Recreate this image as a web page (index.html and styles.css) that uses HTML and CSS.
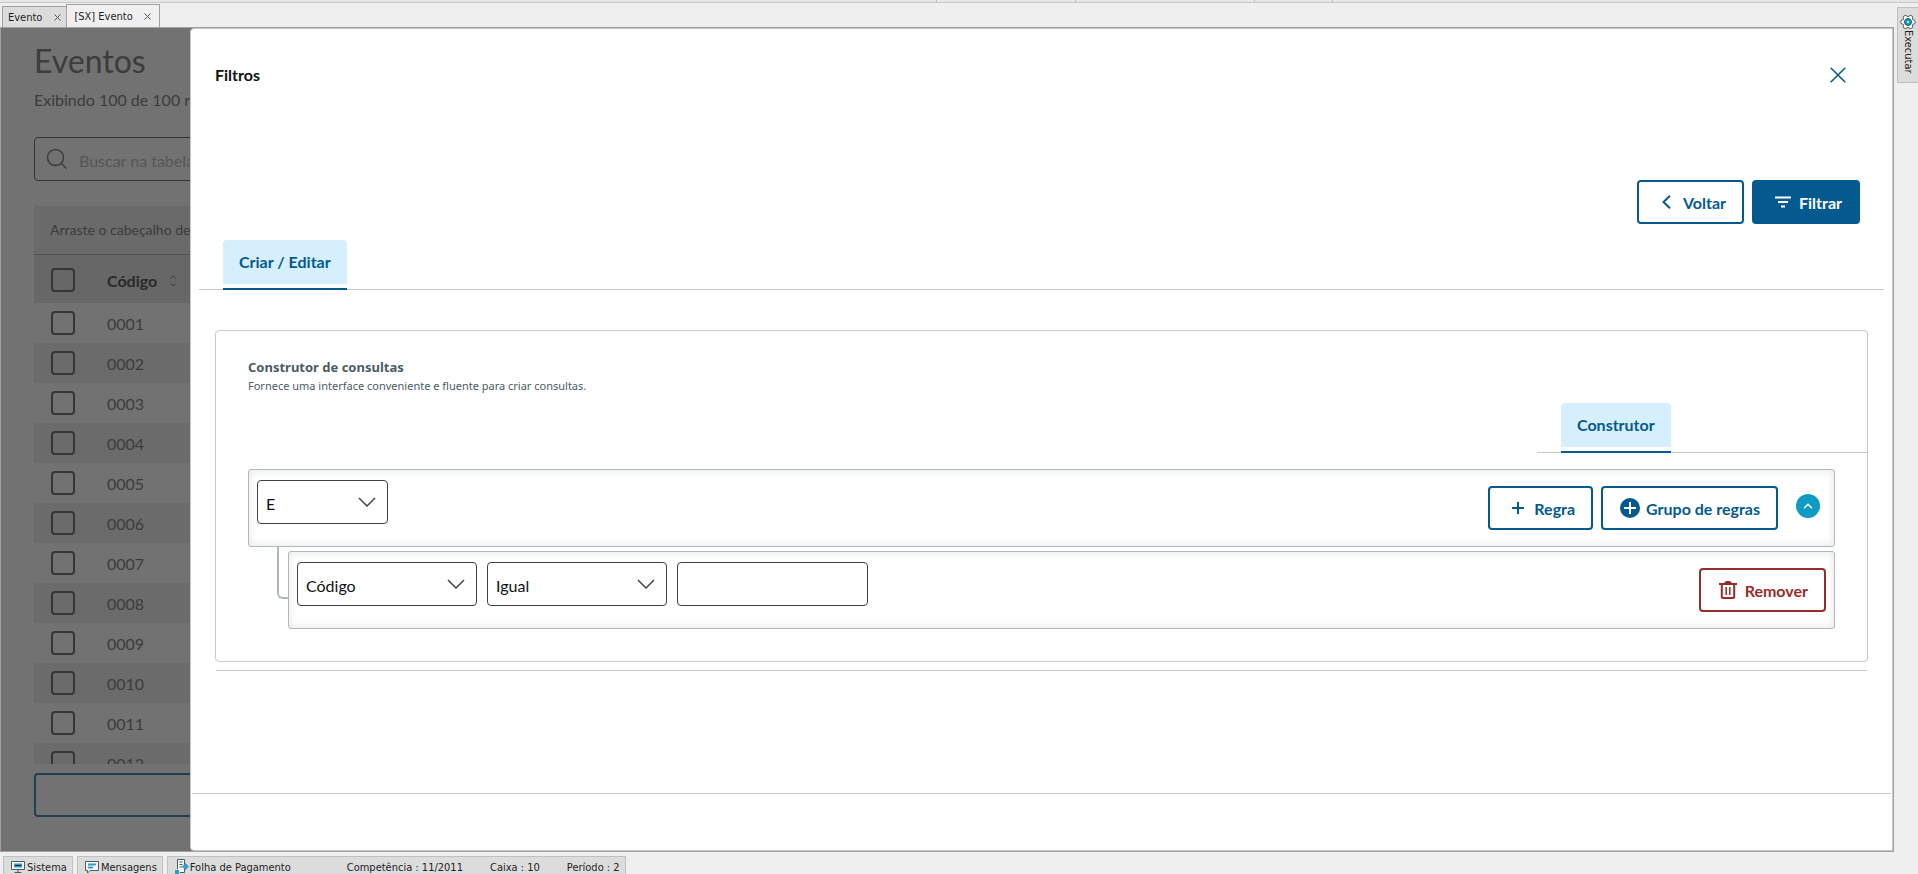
FILE: index.html
```html
<!doctype html>
<html lang="pt-BR">
<head>
	<meta charset="utf-8">
	<title>Evento</title>
	<link rel="stylesheet" href="styles.css">
</head>
<body>
	<div class="app">
		<div class="toolbar-edge"><i></i><i></i><i></i><i></i></div>

		<div class="workspace">
			<div class="main">
				<nav class="tabs">
					<div class="tab"><a href="#">Evento</a><button class="tab-close" aria-label="Fechar Evento"><svg width="7" height="7" viewBox="0 0 7 7"><path d="M.5.5l6 6M6.500 .5l-6 6"/></svg></button></div>
					<div class="tab active"><a href="#">[SX] Evento</a><button class="tab-close" aria-label="Fechar [SX] Evento"><svg width="7" height="7" viewBox="0 0 7 7"><path d="M.5.5l6 6M6.500 .5l-6 6"/></svg></button></div>
				</nav>

				<div class="frame">
					<!-- event list, dimmed by the drawer -->
					<section class="list">
						<h1>Eventos</h1>
						<p class="showing">Exibindo 100 de 100 registros</p>
						<div class="search">
							<svg width="22" height="22" viewBox="0 0 22 22" stroke-width="1.5"><circle cx="9.500" cy="9.500" r="8"/><path d="M15 15l5.500 5.500"/></svg>
							<input type="text" placeholder="Buscar na tabela" aria-label="Buscar na tabela">
						</div>
						<div class="grid">
							<div class="group-hint">Arraste o cabeçalho de uma coluna</div>
							<table>
								<thead>
									<tr>
										<th class="check"><input type="checkbox" aria-label="Selecionar todos"></th>
										<th>Código <svg class="sort" width="8" height="12" viewBox="0 0 8 12"><path d="M1.500 3.500L4 1l2.500 2.500M1.500 8.500L4 11l2.500-2.500"/></svg></th>
									</tr>
								</thead>
								<tbody>
									<tr><td class="check"><input type="checkbox" aria-label="0001"></td><td>0001</td></tr>
									<tr><td class="check"><input type="checkbox" aria-label="0002"></td><td>0002</td></tr>
									<tr><td class="check"><input type="checkbox" aria-label="0003"></td><td>0003</td></tr>
									<tr><td class="check"><input type="checkbox" aria-label="0004"></td><td>0004</td></tr>
									<tr><td class="check"><input type="checkbox" aria-label="0005"></td><td>0005</td></tr>
									<tr><td class="check"><input type="checkbox" aria-label="0006"></td><td>0006</td></tr>
									<tr><td class="check"><input type="checkbox" aria-label="0007"></td><td>0007</td></tr>
									<tr><td class="check"><input type="checkbox" aria-label="0008"></td><td>0008</td></tr>
									<tr><td class="check"><input type="checkbox" aria-label="0009"></td><td>0009</td></tr>
									<tr><td class="check"><input type="checkbox" aria-label="0010"></td><td>0010</td></tr>
									<tr><td class="check"><input type="checkbox" aria-label="0011"></td><td>0011</td></tr>
									<tr><td class="check"><input type="checkbox" aria-label="0012"></td><td>0012</td></tr>
								</tbody>
							</table>
						</div>
						<button class="load-more" aria-label="Carregar mais"></button>
					</section>

					<section class="drawer">
						<header class="drawer-head">
							<h2>Filtros</h2>
							<button class="close" aria-label="Fechar"><svg width="16" height="16" viewBox="0 0 16 16" stroke-width="1.5"><path d="M.7.7l14.600 14.600M15.300.7L.7 15.300"/></svg></button>
						</header>

						<div class="actions">
							<button class="btn voltar"><svg width="9" height="14" viewBox="0 0 9 14"><path d="M8 .8L1.500 7 8 13.200"/></svg>Voltar</button>
							<button class="btn primary"><svg width="16" height="12" viewBox="0 0 16 12"><path d="M0 1.500h16M3 6h10M6 10.500h4"/></svg>Filtrar</button>
						</div>

						<div class="tabbar"><a class="pill" href="#">Criar / Editar</a></div>

						<div class="card">
							<h3>Construtor de consultas</h3>
							<p class="hint">Fornece uma interface conveniente e fluente para criar consultas.</p>
							<div class="tabbar inner"><a class="pill" href="#">Construtor</a></div>

							<div class="group">
								<select class="field small" aria-label="Condição"><option>E</option><option>Ou</option></select>
								<div class="group-actions">
									<button class="btn regra"><svg width="12" height="12" viewBox="0 0 12 12"><path d="M6 0v12M0 6h12"/></svg>Regra</button>
									<button class="btn grupo"><svg width="20" height="20" viewBox="0 0 20 20"><circle class="disc" cx="10" cy="10" r="10"/><path class="cross" d="M10 4v12M4 10h12"/></svg>Grupo de regras</button>
									<button class="toggle" aria-label="Recolher"><svg width="10" height="6" viewBox="0 0 10 6"><path stroke-width="1.5" d="M1 5.200L5 1.300l4 3.900"/></svg></button>
								</div>
							</div>
							<div class="rule-row">
								<div class="rule">
									<select class="field" aria-label="Campo"><option>Código</option></select>
									<select class="field" aria-label="Operador"><option>Igual</option></select>
									<input class="field value" type="text" aria-label="Valor">
									<button class="btn danger"><svg width="18" height="18" viewBox="0 0 18 18"><path d="M0 3h18M2.800 3v12.500q0 1.500 1.500 1.500h9.400q1.500 0 1.500-1.500V3"/><path class="knob" d="M5 2.500Q5.500 0 7.500 0h3Q12.500 0 13 2.500z"/><path stroke-width="1.5" d="M7.200 6v8M10.800 6v8"/></svg>Remover</button>
								</div>
							</div>
						</div>
						<hr class="card-line">
						<footer class="drawer-foot"></footer>
					</section>
				</div>
			</div>

			<aside class="side">
				<button class="executar">
					<svg width="16" height="16" viewBox="0 0 16 16">
						<g class="petals"><circle cx="13" cy="8" r="2.300"/><circle cx="10.500" cy="12.300" r="2.300"/><circle cx="5.500" cy="12.300" r="2.300"/><circle cx="3" cy="8" r="2.300"/><circle cx="5.500" cy="3.700" r="2.300"/><circle cx="10.500" cy="3.700" r="2.300"/></g>
						<circle class="ring" cx="8" cy="8" r="5"/><circle class="core" cx="8" cy="8" r="3.500"/><circle class="dot" cx="8" cy="8" r="1"/>
					</svg>
					<span>Executar</span>
				</button>
			</aside>
		</div>

		<footer class="status">
			<button class="cell"><svg width="14" height="14" viewBox="0 0 14 14"><path class="line" d="M.5 1.500h13v8H.5zM7 9.500v3M3.500 12.500h7"/><path class="blue" d="M3 3.500h8v4H3z"/><path d="M4 5.500h6"/></svg>Sistema</button>
			<button class="cell"><svg width="14" height="14" viewBox="0 0 14 14"><path class="line" d="M.5 1.500h13v9H5l-2.500 2.500v-2.500h-2z"/><path class="blue" d="M3 3.500h8v2H3zM3 6.500h5v2H3z"/></svg>Mensagens</button>
			<div class="cell wide">
				<svg width="14" height="16" viewBox="0 0 14 16"><path class="line" d="M2.500 10V.5h7v13H5M4.500 3h3M4.500 5.500h3M4.500 8h3"/><path class="blue" d="M10.500 4L14 7.500 10.500 11 7 7.500zM0 11h4v4.500H0z"/></svg>
				<span class="module">Folha de Pagamento</span>
				<span>Competência : 11/2011</span>
				<span>Caixa : 10</span>
				<span>Período : 2</span>
			</div>
		</footer>
	</div>
</body>
</html>
```
FILE: styles.css
```css
*, *::before {
	box-sizing: border-box;
}
body {
	margin: 0;
	background: #efefef;
	color: #222;
	font-family: Lato, sans-serif;
	font-size: 16px;
}
button, input, select {
	font: inherit;
	margin: 0;
}
svg {
	fill: none;
	stroke: currentColor;
	flex: none;
}
h1, h2, h3, p {
	margin: 0;
}
.app {
	display: flex;
	flex-direction: column;
	height: 100vh;
	overflow: hidden;
}
.toolbar-edge {
	display: grid;
	grid-template-columns: 937fr 139fr 179fr 78fr 585fr;
	height: 3px;
	background: #e6e6e6;
	border-bottom: 1px solid #c8c8c8;
}
.toolbar-edge i {
	border-right: 1px solid #c0c0c0;
}
.workspace {
	display: flex;
	flex: 1;
	min-height: 0;
}
.main {
	display: flex;
	flex-direction: column;
	flex: 1;
	min-width: 0;
}

/* window tabs */
.tabs, .status, .side {
	font-family: "DejaVu Sans Condensed", "DejaVu Sans", sans-serif;
	font-size: 11px;
}
.tabs {
	display: flex;
	align-items: flex-end;
	height: 24px;
	padding: 0 2px;
}
.tab {
	display: flex;
	align-items: center;
	gap: 12px;
	height: 21px;
	padding: 0 5px;
	background: #dcdcdc;
	border: 1px solid #a0a0a0;
	border-width: 1px 0 0 1px;
}
.tab.active {
	gap: 11px;
	height: 23px;
	padding: 0 8px 0 7px;
	background: #f0f0f0;
	border-width: 1px 1px 0;
}
.tab a {
	color: #1e1e1e;
	text-decoration: none;
}
.tab-close {
	display: flex;
	padding: 0;
	border: 0;
	background: none;
	color: #555;
}

/* content frame */
.frame {
	display: flex;
	flex: 1;
	min-height: 0;
	background: #727272;
	border: 1px solid #a0a0a0;
}
.list {
	display: flex;
	flex-direction: column;
	flex: none;
	width: 189px;
	padding: 13px 0 34px 33px;
	overflow: hidden;
	white-space: nowrap;
	color: #3c3c3c;
}
.list h1 {
	font-size: 32px;
	font-weight: 400;
	line-height: 40px;
}
.showing {
	margin-top: 9px;
	line-height: 20px;
}
.search {
	display: flex;
	align-items: center;
	gap: 11px;
	flex: none;
	width: 400px;
	height: 44px;
	margin-top: 27px;
	padding: 0 11px;
	border: 1px solid #333;
	border-radius: 4px;
}
.search input {
	flex: 1;
	padding: 2px 0 0;
	border: 0;
	background: none;
}
.search input::placeholder {
	color: #565656;
}
.grid {
	flex: 1;
	min-height: 0;
	width: 400px;
	margin-top: 25px;
	overflow: hidden;
}
.group-hint {
	height: 49px;
	padding-left: 16px;
	background: #6a6a6a;
	border-bottom: 1px solid #505050;
	font-size: 14px;
	line-height: 48px;
}
.grid table {
	width: 100%;
	border-collapse: collapse;
}
.grid th, .grid td {
	height: 40px;
	padding: 0 8px 0 0;
	text-align: left;
}
.grid th {
	height: 48px;
	padding-top: 2px;
	background: #676767;
	color: #2a2a2a;
}
.grid tbody tr:nth-child(even) {
	background: #6b6b6b;
}
.grid .check {
	width: 73px;
	padding-left: 17px;
}
.grid input {
	display: block;
	appearance: none;
	width: 24px;
	height: 24px;
	border: 2px solid #363636;
	border-radius: 4px;
}
.sort {
	margin-left: 8px;
	color: #2b3f4c;
}
.load-more {
	flex: none;
	width: 400px;
	height: 44px;
	margin-top: 9px;
	background: none;
	border: 2px solid #1f3f54;
	border-radius: 4px;
}

/* filter drawer */
.drawer {
	display: flex;
	flex-direction: column;
	flex: 1;
	min-width: 0;
	padding: 0 1px;
	background: #fff;
	border: 1px solid #c8c8c8;
	border-radius: 4px 0 0 4px;
}
.drawer-head {
	display: flex;
	align-items: center;
	justify-content: space-between;
	padding: 34px 45px 0 23px;
}
.drawer-head h2 {
	color: #111;
	font-size: 16px;
	line-height: 24px;
}
.close {
	display: flex;
	padding: 0;
	border: 0;
	background: none;
	color: #045a8f;
}
.actions {
	display: flex;
	justify-content: flex-end;
	gap: 8px;
	padding: 93px 31px 0 0;
}
.btn {
	display: flex;
	align-items: center;
	gap: 12px;
	height: 44px;
	padding: 0 16px 0 23px;
	background: #fff;
	border: 2px solid #045a8f;
	border-radius: 4px;
	color: #045a8f;
	font-weight: 700;
	white-space: nowrap;
	stroke-width: 2px;
}
.btn.primary {
	gap: 8px;
	padding-left: 21px;
	background: #045a8f;
	color: #fff;
}
.btn.regra {
	gap: 10px;
	padding-left: 22px;
}
.btn.grupo {
	gap: 6px;
	padding-left: 17px;
}
.btn.danger {
	gap: 8px;
	margin-left: auto;
	padding-left: 18px;
	border-color: #962d28;
	color: #962d28;
}
.knob {
	fill: currentColor;
	stroke: none;
}
.disc {
	fill: #045a8f;
	stroke: none;
}
.cross {
	stroke: #fff;
}
.tabbar {
	display: flex;
	margin: 16px 7px 0;
	padding: 0 24px;
	border-bottom: 1px solid #c8c8c8;
}
.pill {
	height: 50px;
	margin-bottom: -1px;
	padding: 0 16px;
	background: linear-gradient(#fff, #fff) 0 44px / 100% 4px no-repeat, #d6effc;
	border-bottom: 2px solid #045a8f;
	border-radius: 4px 4px 0 0;
	color: #045a8f;
	font-weight: 700;
	line-height: 44px;
	text-decoration: none;
}
.card {
	margin: 40px 23px 0;
	padding: 27px 32px 32px;
	border: 1px solid #c8c8c8;
	border-radius: 4px;
}
.card h3 {
	color: #4a5c60;
	font-family: "Noto Sans", sans-serif;
	font-size: 13px;
	line-height: 18px;
}
.hint {
	color: #4a5c60;
	font-family: "Noto Sans", sans-serif;
	font-size: 11px;
	line-height: 20px;
}
.tabbar.inner {
	width: 330px;
	margin: 7px -32px 0 auto;
}
.group, .rule {
	display: flex;
	align-items: flex-start;
	height: 78px;
	padding: 10px 8px;
	border: 1px solid #b0b8bb;
	border-radius: 3px;
	box-shadow: inset 0 0 10px #e4e4e4;
}
.group {
	justify-content: space-between;
	margin-top: 16px;
}
.group-actions {
	display: flex;
	align-items: flex-start;
	gap: 8px;
	padding: 6px 6px 0 0;
}
.toggle {
	display: flex;
	align-items: center;
	justify-content: center;
	width: 24px;
	height: 24px;
	margin: 8px 0 0 10px;
	padding: 0;
	background: #0f9bc4;
	border: 0;
	border-radius: 50%;
	color: #fff;
}
.rule-row {
	display: flex;
	padding-left: 29px;
}
.rule-row::before {
	content: "";
	width: 11px;
	height: 52px;
	border: 2px solid #b0b8bb;
	border-width: 0 0 2px 2px;
	border-radius: 0 0 0 6px;
}
.rule {
	flex: 1;
	gap: 10px;
	margin-top: 4px;
}
.rule .btn {
	margin-top: 6px;
}
.field {
	appearance: none;
	width: 180px;
	height: 44px;
	padding: 2px 8px 0;
	background: #fff;
	border: 1px solid #404040;
	border-radius: 4px;
	color: #111;
}
select.field {
	background: #fff url("data:image/svg+xml,%3Csvg xmlns='http://www.w3.org/2000/svg' width='18' height='10'%3E%3Cpath d='M1 1l8 8 8-8' fill='none' stroke='%23444' stroke-width='1.500'/%3E%3C/svg%3E") right 11px center no-repeat;
}
.field.small {
	width: 131px;
}
.field.value {
	width: 191px;
}
.card-line {
	align-self: stretch;
	margin: 8px 24px 0;
	border: 0;
	border-top: 1px solid #c8c8c8;
}
.drawer-foot {
	height: 57px;
	margin-top: auto;
	border-top: 1px solid #c8c8c8;
}

/* docked panel */
.side {
	flex: none;
	width: 24px;
	padding: 4px 0 0 3px;
}
.executar {
	display: flex;
	flex-direction: column;
	align-items: center;
	width: 22px;
	height: 76px;
	padding: 6px 0 0;
	background: #dcdcdc;
	border: 1px solid #c0c0c0;
	color: #1e1e1e;
}
.executar span {
	writing-mode: vertical-rl;
}
.petals {
	fill: #fff;
	stroke: #4a5c60;
}
.ring {
	fill: #fff;
	stroke: none;
}
.core {
	fill: #0f9bc4;
	stroke: #2c5866;
}
.dot {
	fill: #fff;
	stroke: none;
}

/* status bar */
.status {
	display: flex;
	gap: 4px;
	height: 22px;
	padding: 4px 3px 0;
}
.cell {
	display: flex;
	align-items: center;
	gap: 2px;
	height: 22px;
	padding: 0 5px 0 7px;
	background: #dcdcdc;
	border: 1px solid #c0c0c0;
	color: #1e1e1e;
	white-space: nowrap;
}
.cell.wide {
	gap: 27px;
}
.wide svg {
	margin-right: -26px;
}
.module {
	margin-right: 29px;
}
.line {
	fill: #f6f6f6;
	stroke: #4a5c60;
}
.blue {
	fill: #2f9fc8;
	stroke: none;
}
```
